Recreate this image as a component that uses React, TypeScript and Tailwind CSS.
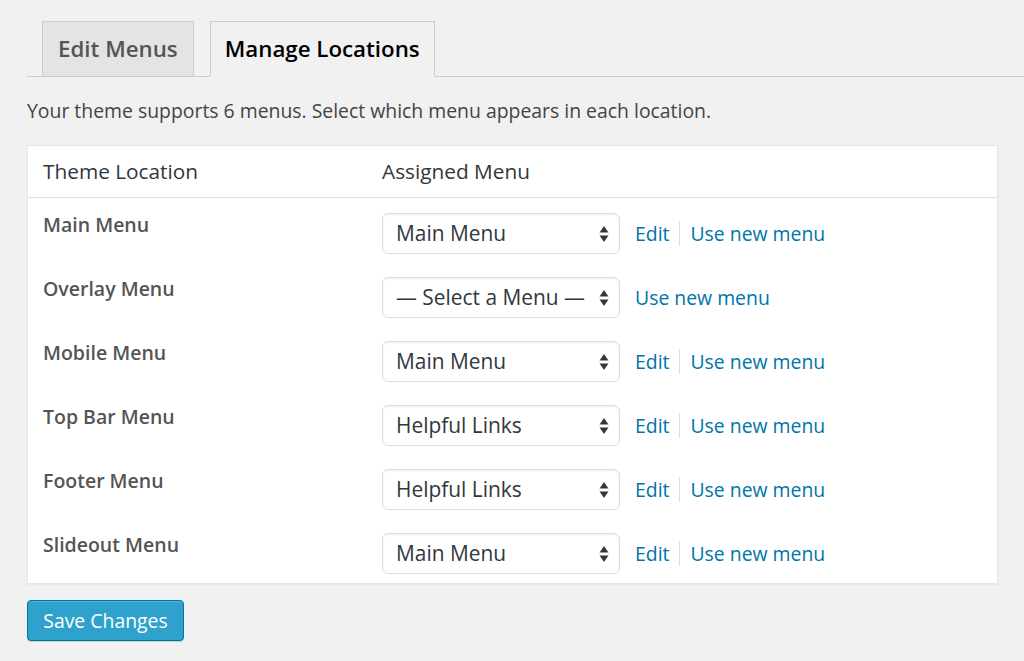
import React from 'react';

const rows = [
  { label: 'Main Menu', value: 'Main Menu', edit: true },
  { label: 'Overlay Menu', value: '— Select a Menu —', edit: false },
  { label: 'Mobile Menu', value: 'Main Menu', edit: true },
  { label: 'Top Bar Menu', value: 'Helpful Links', edit: true },
  { label: 'Footer Menu', value: 'Helpful Links', edit: true },
  { label: 'Slideout Menu', value: 'Main Menu', edit: true },
];

function Arrows() {
  return (
    <svg width="10" height="20" viewBox="0 0 10 20" className="shrink-0">
      <path d="M5 2 L9.5 8.5 H0.5 Z" fill="#32373c" />
      <path d="M5 18 L9.5 11.5 H0.5 Z" fill="#32373c" />
    </svg>
  );
}

export default function App() {
  return (
    <div
      className="min-h-[661px] w-[1024px] bg-[#f1f1f1] text-[#444]"
      style={{ fontFamily: '"Open Sans", "Liberation Sans", sans-serif' }}
    >
      <div className="pt-[21px] pl-[27px]">
        <div className="flex items-end gap-[16px] border-b border-[#ccc] pl-[15px]">
          <div className="-mb-px h-[56px] px-[15px] flex items-center border border-[#ccc] bg-[#e4e4e4] text-[22.3px] font-semibold text-[#555]">
            Edit Menus
          </div>
          <div className="-mb-px h-[56px] px-[14px] flex items-center border border-[#ccc] border-b-[#f1f1f1] bg-[#f1f1f1] text-[22.3px] font-semibold text-black">
            Manage Locations
          </div>
        </div>
      </div>

      <p className="mt-[20px] pl-[27px] text-[19.4px] leading-[28px] text-[#444]">
        Your theme supports 6 menus. Select which menu appears in each location.
      </p>

      <div className="mt-[20px] ml-[27px] w-[971px] bg-white border border-[#e5e5e5] shadow-[0_1px_1px_rgba(0,0,0,0.04)]">
        <div className="flex h-[52px] items-center border-b border-[#e1e1e1] text-[20.8px] text-[#32373c]">
          <div className="w-[354px] pl-[15px]">Theme Location</div>
          <div>Assigned Menu</div>
        </div>
        {rows.map((r) => (
          <div key={r.label} className="flex h-[64px]">
            <div className="w-[354px] pl-[15px] pt-[13px] text-[19.5px] leading-[28px] font-semibold text-[#555]">
              {r.label}
            </div>
            <div className="flex items-start pt-[15px]">
              <div className="flex h-[41px] w-[238px] items-center justify-between rounded-[6px] border border-[#ddd] bg-white pl-[13px] pr-[10px] text-[20.9px] text-[#32373c] shadow-[inset_0_1px_2px_rgba(0,0,0,0.07)]">
                <span>{r.value}</span>
                <Arrows />
              </div>
              <div className="flex h-[41px] items-center pl-[15px] text-[19.4px] text-[#0073aa]">
                {r.edit && (
                  <>
                    <span>Edit</span>
                    <span className="mx-[10px] h-[25px] w-px bg-[#ddd]" />
                  </>
                )}
                <span>Use new menu</span>
              </div>
            </div>
          </div>
        ))}
        <div className="h-[1px]" />
      </div>

      <div className="pl-[27px] pt-[16px]">
        <button
          type="button"
          className="h-[41px] w-[157px] rounded-[4px] border border-[#0074a2] bg-[#2ea2cc] text-[19.4px] text-white shadow-[inset_0_1px_0_rgba(120,200,230,0.5),0_1px_0_rgba(0,0,0,0.15)]"
        >
          Save Changes
        </button>
      </div>
    </div>
  );
}
